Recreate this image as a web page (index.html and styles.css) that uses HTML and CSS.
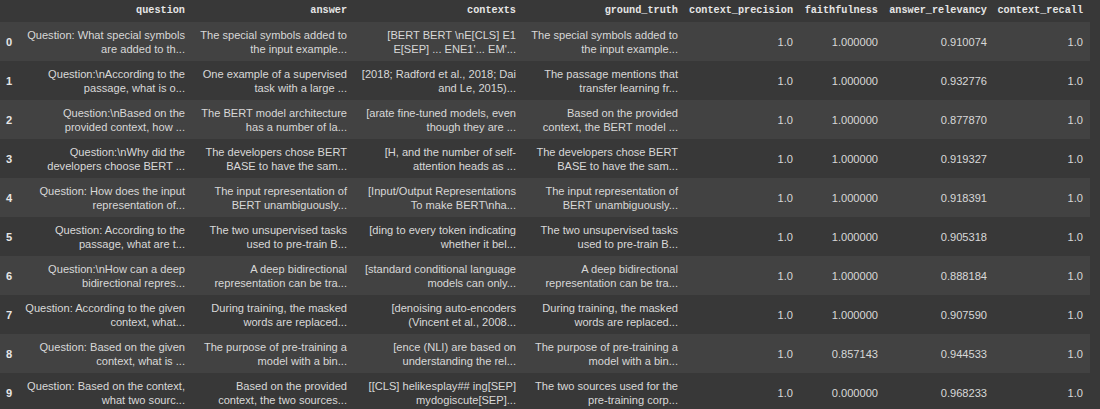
FILE: index.html
```html
<!DOCTYPE html>
<html>
<head>
<meta charset="utf-8">
<link rel="stylesheet" href="styles.css">
</head>
<body>
<table class="df">
  <colgroup>
    <col class="c-idx"><col class="c-q"><col class="c-a"><col class="c-c"><col class="c-g">
    <col class="c-cp"><col class="c-f"><col class="c-ar"><col class="c-cr">
  </colgroup>
  <thead>
    <tr>
      <th></th><th>question</th><th>answer</th><th>contexts</th><th>ground_truth</th>
      <th>context_precision</th><th>faithfulness</th><th>answer_relevancy</th><th>context_recall</th>
    </tr>
  </thead>
  <tbody>
    <tr><th>0</th><td>Question: What special symbols<br>are added to th...</td><td>The special symbols added to<br>the input example...</td><td>[BERT BERT \nE[CLS] E1<br>E[SEP] ... ENE1'... EM'...</td><td>The special symbols added to<br>the input example...</td><td>1.0</td><td>1.000000</td><td>0.910074</td><td>1.0</td></tr>
    <tr><th>1</th><td>Question:\nAccording to the<br>passage, what is o...</td><td>One example of a supervised<br>task with a large ...</td><td>[2018; Radford et al., 2018; Dai<br>and Le, 2015)...</td><td>The passage mentions that<br>transfer learning fr...</td><td>1.0</td><td>1.000000</td><td>0.932776</td><td>1.0</td></tr>
    <tr><th>2</th><td>Question:\nBased on the<br>provided context, how ...</td><td>The BERT model architecture<br>has a number of la...</td><td>[arate fine-tuned models, even<br>though they are ...</td><td>Based on the provided<br>context, the BERT model ...</td><td>1.0</td><td>1.000000</td><td>0.877870</td><td>1.0</td></tr>
    <tr><th>3</th><td>Question:\nWhy did the<br>developers choose BERT ...</td><td>The developers chose BERT<br>BASE to have the sam...</td><td>[H, and the number of self-<br>attention heads as ...</td><td>The developers chose BERT<br>BASE to have the sam...</td><td>1.0</td><td>1.000000</td><td>0.919327</td><td>1.0</td></tr>
    <tr><th>4</th><td>Question: How does the input<br>representation of...</td><td>The input representation of<br>BERT unambiguously...</td><td>[Input/Output Representations<br>To make BERT\nha...</td><td>The input representation of<br>BERT unambiguously...</td><td>1.0</td><td>1.000000</td><td>0.918391</td><td>1.0</td></tr>
    <tr><th>5</th><td>Question: According to the<br>passage, what are t...</td><td>The two unsupervised tasks<br>used to pre-train B...</td><td>[ding to every token indicating<br>whether it bel...</td><td>The two unsupervised tasks<br>used to pre-train B...</td><td>1.0</td><td>1.000000</td><td>0.905318</td><td>1.0</td></tr>
    <tr><th>6</th><td>Question:\nHow can a deep<br>bidirectional repres...</td><td>A deep bidirectional<br>representation can be tra...</td><td>[standard conditional language<br>models can only...</td><td>A deep bidirectional<br>representation can be tra...</td><td>1.0</td><td>1.000000</td><td>0.888184</td><td>1.0</td></tr>
    <tr><th>7</th><td>Question: According to the given<br>context, what...</td><td>During training, the masked<br>words are replaced...</td><td>[denoising auto-encoders<br>(Vincent et al., 2008...</td><td>During training, the masked<br>words are replaced...</td><td>1.0</td><td>1.000000</td><td>0.907590</td><td>1.0</td></tr>
    <tr><th>8</th><td>Question: Based on the given<br>context, what is ...</td><td>The purpose of pre-training a<br>model with a bin...</td><td>[ence (NLI) are based on<br>understanding the rel...</td><td>The purpose of pre-training a<br>model with a bin...</td><td>1.0</td><td>0.857143</td><td>0.944533</td><td>1.0</td></tr>
    <tr><th>9</th><td>Question: Based on the context,<br>what two sourc...</td><td>Based on the provided<br>context, the two sources...</td><td>[[CLS] helikesplay## ing[SEP]<br>mydogiscute[SEP]...</td><td>The two sources used for the<br>pre-training corp...</td><td>1.0</td><td>0.000000</td><td>0.968233</td><td>1.0</td></tr>
  </tbody>
</table>
</body>
</html>
```
FILE: styles.css
```css
html, body {
  margin: 0;
  padding: 0;
  background: #383838;
}

.df {
  border-collapse: collapse;
  table-layout: fixed;
  width: 1090px;
  color: #d8d8d8;
  font-family: "Liberation Sans", Arial, sans-serif;
  font-size: 11.1px;
  line-height: 14px;
}

.c-idx { width: 20px; }
.c-q { width: 172px; }
.c-a { width: 162px; }
.c-c { width: 169px; }
.c-g { width: 162px; }
.c-cp { width: 115px; }
.c-f { width: 85px; }
.c-ar { width: 109px; }
.c-cr { width: 96px; }

.df thead th {
  height: 22px;
  padding: 0 7px 0 0;
  text-align: right;
  vertical-align: middle;
  font-family: "Liberation Mono", "DejaVu Sans Mono", monospace;
  font-weight: bold;
  font-size: 10.2px;
  color: #e6e6e6;
  white-space: nowrap;
}

.df tbody tr {
  height: 39px;
}

.df tbody tr:nth-child(odd) {
  background: #424242;
}

.df tbody th {
  padding: 0 0 0 6px;
  text-align: left;
  vertical-align: middle;
  font-weight: bold;
  color: #e6e6e6;
}

.df tbody td {
  padding: 6px 7px 5px 0;
  text-align: right;
  vertical-align: middle;
  white-space: nowrap;
  overflow: hidden;
}
```
